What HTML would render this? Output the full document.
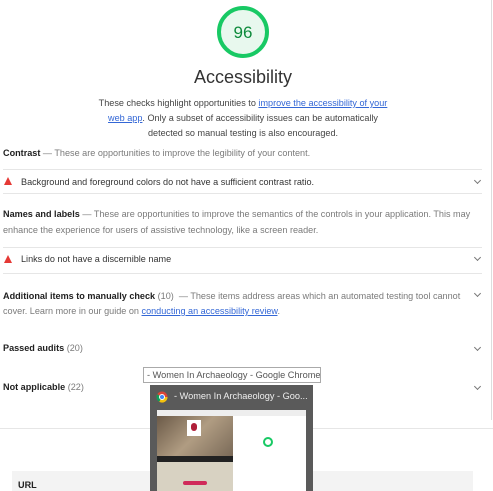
<!DOCTYPE html>
<html><head><meta charset="utf-8"><style>
*{margin:0;padding:0;box-sizing:border-box}
body{width:493px;height:491px;overflow:hidden;background:#fff;font-family:"Liberation Sans",Arial,sans-serif;position:relative;color:#212121}
.a{position:absolute}
.t{font-size:9.1px;white-space:nowrap}
.g{color:#7a7a7a}
.b{font-weight:bold;color:#212121}
.hr{position:absolute;left:3px;width:479px;height:1px;background:#e6e6e6}
a{color:#3367d6;text-decoration:underline}
.chev{position:absolute;right:13px;width:5px;height:5px;border-right:1.2px solid #777;border-bottom:1.2px solid #777;transform:rotate(45deg)}
.tri{position:absolute;left:4px;width:0;height:0;border-left:4px solid transparent;border-right:4px solid transparent;border-bottom:8px solid #e53935}
</style></head><body>
<svg class="a" style="left:216px;top:5px" width="54" height="54"><circle cx="27" cy="27" r="24" fill="#e8f8ee" stroke="#18c964" stroke-width="4"/><text x="27" y="33" text-anchor="middle" font-family="Liberation Sans" font-size="17" fill="#0d8a3b">96</text></svg>
<div class="a" style="left:0;width:486px;top:67px;text-align:center;font-size:18px;color:#333">Accessibility</div>
<div class="a t" style="left:0;width:486px;top:96px;text-align:center;line-height:15px;color:#444">These checks highlight opportunities to <a>improve the accessibility of your</a><br><a>web app</a>. Only a subset of accessibility issues can be automatically<br>detected so manual testing is also encouraged.</div>
<div class="a t" style="left:3px;top:148px"><span class="b">Contrast</span> <span class="g">— These are opportunities to improve the legibility of your content.</span></div>
<div class="hr" style="top:169px"></div>
<div class="tri" style="top:177px"></div>
<div class="a t" style="left:21px;top:177px;color:#333">Background and foreground colors do not have a sufficient contrast ratio.</div>
<div class="chev" style="top:178px"></div>
<div class="hr" style="top:193px"></div>
<div class="a t" style="left:3px;top:206px;line-height:16px"><span class="b">Names and labels</span> <span class="g">— These are opportunities to improve the semantics of the controls in your application. This may<br>enhance the experience for users of assistive technology, like a screen reader.</span></div>
<div class="hr" style="top:247px"></div>
<div class="tri" style="top:255px"></div>
<div class="a t" style="left:21px;top:254px;color:#333">Links do not have a discernible name</div>
<div class="chev" style="top:255px"></div>
<div class="hr" style="top:273px"></div>
<div class="a t" style="left:3px;top:289px;line-height:15px"><span class="b">Additional items to manually check</span> <span class="g">(10) &nbsp;— These items address areas which an automated testing tool cannot<br>cover. Learn more in our guide on </span><a>conducting an accessibility review</a><span class="g">.</span></div>
<div class="chev" style="top:291px"></div>
<div class="a t" style="left:3px;top:343px"><span class="b">Passed audits</span> <span class="g">(20)</span></div>
<div class="chev" style="top:345px"></div>
<div class="a t" style="left:3px;top:382px"><span class="b">Not applicable</span> <span class="g">(22)</span></div>
<div class="chev" style="top:384px"></div>
<div class="a" style="left:0;top:428px;width:493px;height:1px;background:#e6e6e6"></div>
<div class="a" style="left:12px;top:471px;width:461px;height:20px;background:#f3f3f3"></div>
<div class="a t b" style="left:18px;top:480px">URL</div>
<div class="a" style="left:491px;top:0;width:1px;height:420px;background:#ddd"></div>
<div class="a" style="left:143px;top:367px;width:178px;height:16px;border:1px solid #aaa;background:#fff;font-size:9.2px;color:#555;padding:2px 0 0 3px;white-space:nowrap;overflow:hidden">- Women In Archaeology - Google Chrome</div>
<div class="a" style="left:150px;top:385px;width:163px;height:106px;background:#5a5a5a"></div>
<svg class="a" style="left:156px;top:391px" width="12" height="12"><circle cx="6" cy="6" r="5.5" fill="#db4437"/><path d="M6 6 L11.5 6 A5.5 5.5 0 0 1 3.2 10.8Z" fill="#f4c20d"/><path d="M6 6 L3.2 10.8 A5.5 5.5 0 0 1 1.2 3.2Z" fill="#0f9d58"/><circle cx="6" cy="6" r="2.5" fill="#4285f4" stroke="#fff" stroke-width="1"/></svg>
<div class="a" style="left:174px;top:391px;font-size:9.2px;color:#eee;white-space:nowrap">- Women In Archaeology - Goo...</div>
<div class="a" style="left:157px;top:410px;width:149px;height:81px;background:#fff"></div>
<div class="a" style="left:157px;top:410px;width:149px;height:6px;background:#eee"></div>
<div class="a" style="left:157px;top:416px;width:76px;height:40px;background:linear-gradient(135deg,#6b5a48,#b09c82 50%,#7a6a58)"></div>
<div class="a" style="left:187px;top:420px;width:14px;height:16px;background:#fff"></div>
<div class="a" style="left:191px;top:423px;width:6px;height:8px;border-radius:3px;background:#b0203a"></div>
<div class="a" style="left:157px;top:456px;width:76px;height:6px;background:#222"></div>
<div class="a" style="left:157px;top:462px;width:76px;height:29px;background:#d8d2c2"></div>
<div class="a" style="left:183px;top:481px;width:24px;height:4px;border-radius:2px;background:#d02a5a"></div>
<div class="a" style="left:263px;top:437px;width:10px;height:10px;border-radius:50%;border:2px solid #18c964"></div>
</body></html>
